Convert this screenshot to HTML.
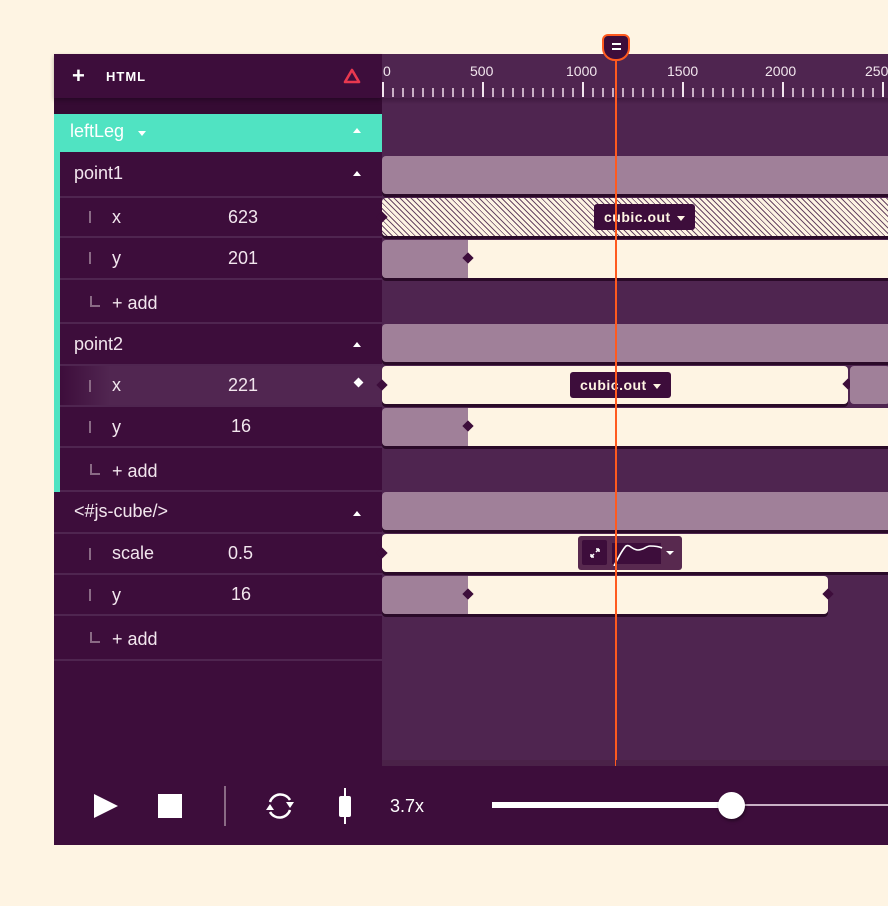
<!DOCTYPE html>
<html><head><meta charset="utf-8"><style>
*{margin:0;padding:0;box-sizing:border-box}
body{width:888px;height:906px;background:#fef4e3;position:relative;overflow:hidden;font-family:"Liberation Sans",sans-serif}
.a{position:absolute}
.lbl{position:absolute;color:#f2e6ee;font-size:18px}
.row{position:absolute;left:60px;width:322px;border-bottom:2px solid #4f2550;background:#3d0d3b}
.bar{position:absolute;left:382px;border-radius:4px;box-shadow:0 3px 0 #2a0a28}
.tri{position:absolute;width:0;height:0;border-left:4px solid transparent;border-right:4px solid transparent;border-bottom:5px solid #fff}
.dia{position:absolute;width:8px;height:8px;background:#3d0d3b;transform:rotate(45deg)}
.pipe{position:absolute;left:89px;width:2px;height:12px;background:#8a6a85}
.tag{position:absolute;background:#3d0d3b;color:#fef4e3;font-weight:bold;font-size:14px;border-radius:3px;padding:0 10px;height:26px;line-height:26px;letter-spacing:.5px}
.dd{display:inline-block;width:0;height:0;border-left:4px solid transparent;border-right:4px solid transparent;border-top:5px solid #fef4e3;vertical-align:middle;margin-left:2px}
</style></head><body>
<div class="a" style="left:54px;top:54px;width:328px;height:712px;background:#3d0d3b"></div>
<div class="a" style="left:54px;top:98px;width:328px;height:16px;background:#350b33"></div>
<div class="a" style="left:54px;top:54px;width:328px;height:44px;background:#3d0d3b;box-shadow:0 2px 4px rgba(0,0,0,.3)"></div>
<div class="lbl" style="left:72px;top:63px;font-size:22px;font-weight:bold;color:#fff">+</div>
<div class="lbl" style="left:106px;top:69px;font-size:13px;font-weight:bold;color:#fff;letter-spacing:1px">HTML</div>
<svg class="a" style="left:343px;top:68px" width="18" height="16"><path d="M9 2 L16 14 H2 Z" fill="none" stroke="#e8384f" stroke-width="2.6" stroke-linejoin="round"/></svg>
<div class="a" style="left:382px;top:54px;width:506px;height:712px;background:#4f2550"></div>
<div class="a" style="left:382px;top:98px;width:506px;height:6px;background:linear-gradient(#3f1a40,#4f2550)"></div>
<svg class="a" style="left:382px;top:60px" width="506" height="40">
<g fill="#f2e6ee" font-family="Liberation Sans" font-size="14">
<text x="1" y="16">0</text><text x="88" y="16">500</text><text x="184" y="16">1000</text><text x="285" y="16">1500</text><text x="383" y="16">2000</text><text x="483" y="16">2500</text></g>
<g id="t"></g>
</svg>
<script>
var g=document.getElementById('t'),s='';
for(var i=0;i<=50;i++){var x=1+i*10;var M=i%10==0;s+='<line x1="'+x+'" x2="'+x+'" y1="'+(M?22:28)+'" y2="37" stroke-width="2" stroke="'+(M?'#f2e6ee':'#c9b0c5')+'"/>';}
g.innerHTML=s;
</script>
<div class="a" style="left:54px;top:114px;width:328px;height:38px;background:#50e3c2"></div>
<div class="lbl" style="left:70px;top:121px;color:#fff;font-size:18px">leftLeg</div>
<div class="tri" style="left:138px;top:131px;border-bottom:none;border-top:5px solid #fff"></div>
<div class="tri" style="left:353px;top:128px"></div>
<div class="a" style="left:54px;top:152px;width:6px;height:340px;background:#50e3c2"></div>

<div class="row" style="top:152px;height:46px"></div><div class="lbl" style="left:74px;top:163px">point1</div><div class="tri" style="left:353px;top:171px"></div>
<div class="row" style="top:198px;height:40px"></div><div class="pipe" style="top:211px"></div><div class="lbl" style="left:112px;top:207px">x</div><div class="lbl" style="left:228px;top:207px">623</div>
<div class="row" style="top:238px;height:42px"></div><div class="pipe" style="top:252px"></div><div class="lbl" style="left:112px;top:248px">y</div><div class="lbl" style="left:228px;top:248px">201</div>
<div class="row" style="top:280px;height:44px"></div><div class="a" style="left:90px;top:296px;width:10px;height:11px;border-left:2px solid #8a6a85;border-bottom:2px solid #8a6a85"></div><div class="lbl" style="left:112px;top:293px">+ add</div>

<div class="row" style="top:324px;height:42px"></div><div class="lbl" style="left:74px;top:334px">point2</div><div class="tri" style="left:353px;top:342px"></div>
<div class="row" style="top:366px;height:41px;background:linear-gradient(90deg,#3d0d3b 0,#512651 50px,#512651)"></div><div class="pipe" style="top:380px"></div><div class="lbl" style="left:112px;top:375px">x</div><div class="lbl" style="left:228px;top:375px">221</div><div class="a" style="left:355px;top:379px;width:7px;height:7px;background:#fff;transform:rotate(45deg)"></div>
<div class="row" style="top:407px;height:41px"></div><div class="pipe" style="top:421px"></div><div class="lbl" style="left:112px;top:417px">y</div><div class="lbl" style="left:231px;top:416px">16</div>
<div class="row" style="top:448px;height:44px"></div><div class="a" style="left:90px;top:464px;width:10px;height:11px;border-left:2px solid #8a6a85;border-bottom:2px solid #8a6a85"></div><div class="lbl" style="left:112px;top:461px">+ add</div>

<div class="row" style="left:54px;width:328px;top:492px;height:42px"></div><div class="lbl" style="left:74px;top:501px">&lt;#js-cube/&gt;</div><div class="tri" style="left:353px;top:511px"></div>
<div class="row" style="left:54px;width:328px;top:534px;height:41px"></div><div class="pipe" style="top:548px"></div><div class="lbl" style="left:112px;top:543px">scale</div><div class="lbl" style="left:228px;top:543px">0.5</div>
<div class="row" style="left:54px;width:328px;top:575px;height:41px"></div><div class="pipe" style="top:589px"></div><div class="lbl" style="left:112px;top:585px">y</div><div class="lbl" style="left:231px;top:584px">16</div>
<div class="row" style="left:54px;width:328px;top:616px;height:45px"></div><div class="a" style="left:90px;top:632px;width:10px;height:11px;border-left:2px solid #8a6a85;border-bottom:2px solid #8a6a85"></div><div class="lbl" style="left:112px;top:629px">+ add</div>

<div class="bar" style="top:156px;width:520px;height:38px;background:#a08099"></div>
<div class="bar" style="top:198px;width:520px;height:38px;background:repeating-linear-gradient(45deg,#fef4e3 0,#fef4e3 3px,#6a4a66 3px,#6a4a66 4px)"></div>
<div class="tag" style="left:594px;top:204px">cubic.out <span class="dd"></span></div>
<div class="bar" style="top:240px;width:520px;height:38px;background:linear-gradient(90deg,#a08099 0,#a08099 86px,#fef4e3 86px)"></div><div class="dia" style="left:464px;top:254px"></div>
<div class="bar" style="top:324px;width:520px;height:38px;background:#a08099"></div>
<div class="bar" style="top:366px;width:466px;height:38px;background:#fef4e3"></div><div class="dia" style="left:844px;top:380px"></div>
<div class="a" style="left:850px;top:366px;width:40px;height:38px;background:#a08099;border-radius:4px"></div>
<div class="tag" style="left:570px;top:372px">cubic.out <span class="dd"></span></div>
<div class="bar" style="top:408px;width:520px;height:38px;background:linear-gradient(90deg,#a08099 0,#a08099 86px,#fef4e3 86px)"></div><div class="dia" style="left:464px;top:422px"></div>
<div class="bar" style="top:492px;width:520px;height:38px;background:#a08099"></div>
<div class="bar" style="top:534px;width:520px;height:38px;background:#fef4e3"></div>
<div class="a" style="left:578px;top:536px;width:104px;height:34px;background:#58294f;border-radius:3px"></div>
<div class="a" style="left:582px;top:540px;width:25px;height:25px;background:#3d0d3b;border-radius:2px"></div>
<svg class="a" style="left:589px;top:547px" width="12" height="12"><path d="M2 10 L5 7 M2 10 V7 M2 10 H5 M10 2 L7 5 M10 2 V5 M10 2 H7" stroke="#fff" stroke-width="1.5" fill="none"/></svg>
<div class="a" style="left:612px;top:543px;width:49px;height:21px;background:#3d0d3b"></div>
<svg class="a" style="left:612px;top:540px" width="52" height="26"><path d="M2 26 C6 18 10 10 14 6 C18 4 20 10 26 10 C32 10 34 6 38 6 C42 6 46 6 50 8" stroke="#fff" stroke-width="1.6" fill="none"/></svg>
<div class="tri" style="left:666px;top:551px;border-bottom:none;border-top:4px solid #fff"></div>
<div class="bar" style="top:576px;width:446px;height:38px;background:linear-gradient(90deg,#a08099 0,#a08099 86px,#fef4e3 86px)"></div><div class="dia" style="left:464px;top:590px"></div><div class="dia" style="left:824px;top:590px"></div>
<div class="dia" style="left:378px;top:213px"></div><div class="dia" style="left:378px;top:381px"></div><div class="dia" style="left:378px;top:549px"></div>

<div class="a" style="left:615px;top:58px;width:2px;height:708px;background:#ff5a1f"></div>
<div class="a" style="left:602px;top:34px;width:28px;height:27px;background:#3d0d3b;border:2px solid #ff5a1f;border-radius:6px 6px 13px 13px"></div>
<div class="a" style="left:612px;top:43px;width:9px;height:2px;background:#fff"></div><div class="a" style="left:612px;top:48px;width:9px;height:2px;background:#fff"></div>

<div class="a" style="left:54px;top:766px;width:834px;height:79px;background:#3d0d3b"></div>
<div class="a" style="left:382px;top:760px;width:506px;height:6px;background:#4a2248"></div>
<div class="a" style="left:615px;top:760px;width:1px;height:6px;background:#ff5a1f"></div>
<svg class="a" style="left:94px;top:794px" width="26" height="26"><path d="M0 0 L24 12 L0 24Z" fill="#fff"/></svg>
<div class="a" style="left:158px;top:794px;width:24px;height:24px;background:#fff"></div>
<div class="a" style="left:224px;top:786px;width:2px;height:40px;background:#8a6a85"></div>
<svg class="a" style="left:262px;top:790px" width="36" height="32"><g fill="none" stroke="#fff" stroke-width="2.5"><path d="M8 12 A11 11 0 0 1 28 10"/><path d="M28 20 A11 11 0 0 1 8 22"/></g><path d="M24 12 L32 12 L28 18Z M12 20 L4 20 L8 14Z" fill="#fff"/></svg>
<div class="a" style="left:344px;top:788px;width:2px;height:36px;background:#fff"></div>
<div class="a" style="left:339px;top:796px;width:12px;height:21px;background:#fff;border-radius:2px"></div>
<div class="lbl" style="left:390px;top:796px;font-size:18px;color:#fff">3.7x</div>
<div class="a" style="left:492px;top:802px;width:240px;height:6px;background:#fff"></div>
<div class="a" style="left:732px;top:804px;width:156px;height:2px;background:#c9b0c5"></div>
<div class="a" style="left:718px;top:792px;width:27px;height:27px;border-radius:50%;background:#fff;box-shadow:1px 2px 3px rgba(0,0,0,.4)"></div>
</body></html>
